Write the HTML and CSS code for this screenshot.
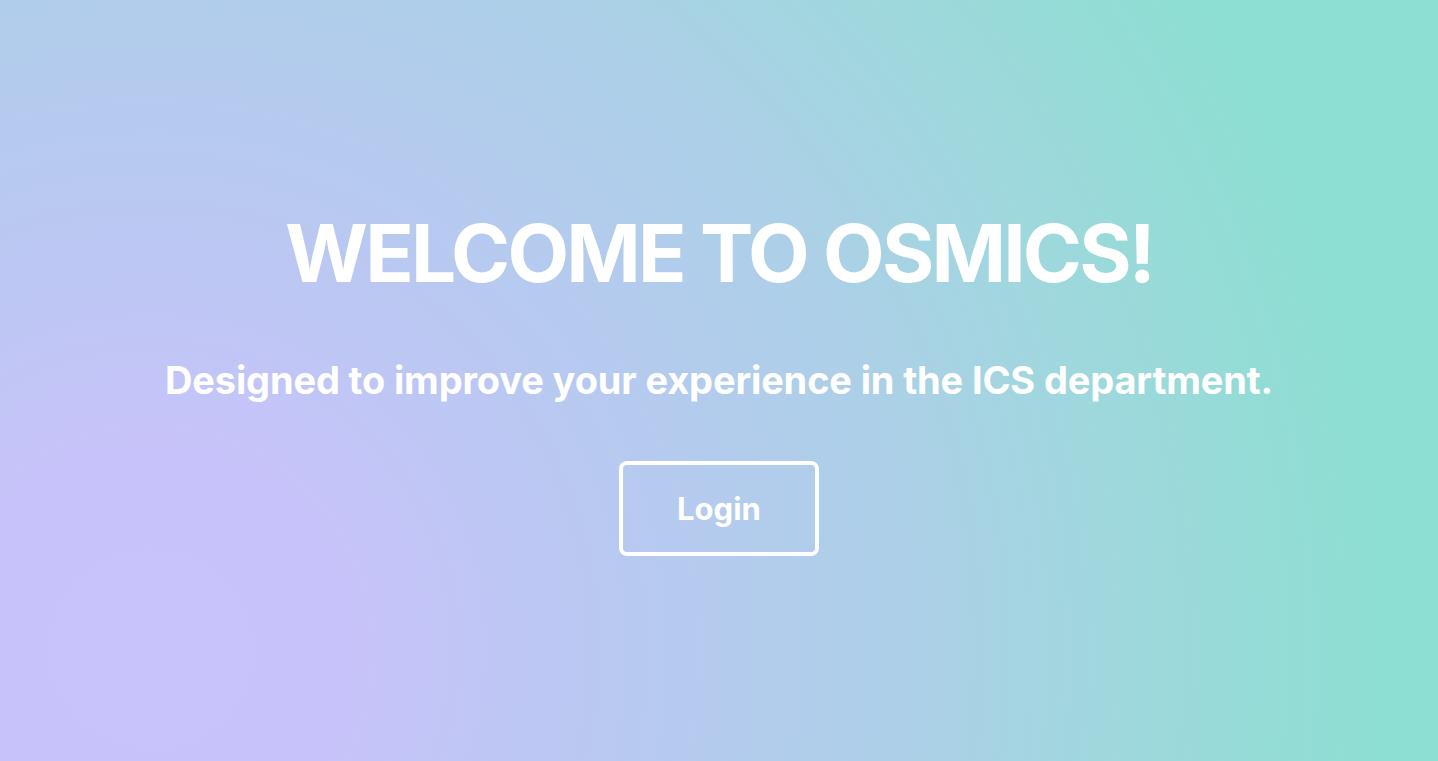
FILE: index.html
```html
<!DOCTYPE html>
<html lang="en">
<head>
<meta charset="utf-8">
<title>Osmics</title>
<link rel="stylesheet" href="styles.css">
</head>
<body>
<main class="hero">
  <h1 class="hero-title">WELCOME TO OSMICS!</h1>
  <p class="hero-subtitle">Designed to improve your experience in the ICS department.</p>
  <button class="login-btn" type="button">Login</button>
</main>
</body>
</html>
```
FILE: styles.css
```css
html, body {
  margin: 0;
  padding: 0;
  height: 100%;
}

body {
  font-family: Inter, "Noto Sans", "Liberation Sans", sans-serif;
  color: #ffffff;
  background: radial-gradient(circle at 150px 650px,
    #c8c3fb 0px,
    #c7c3fa 200px,
    #bdc7f3 380px,
    #b4cbee 570px,
    #acd0e7 770px,
    #a0d7de 950px,
    #96dbd7 1100px,
    #8cdfd2 1250px);
  overflow: hidden;
}

.hero {
  height: 100vh;
  box-sizing: border-box;
  display: flex;
  flex-direction: column;
  align-items: center;
  justify-content: center;
  gap: 57px;
  text-align: center;
}

.hero-title {
  margin: 0;
  font-size: 80px;
  line-height: 1.2;
  font-weight: 700;
  letter-spacing: -2.8px;
}

.hero-subtitle {
  margin: 0;
  font-size: 38px;
  line-height: 1.2;
  font-weight: 700;
  letter-spacing: -0.15px;
}

.login-btn {
  box-sizing: border-box;
  width: 200px;
  height: 95px;
  border: 4px solid #ffffff;
  border-radius: 8px;
  background: transparent;
  color: #ffffff;
  font-family: inherit;
  font-size: 31px;
  font-weight: 700;
  line-height: 1;
  padding: 0;
  cursor: pointer;
}
```
